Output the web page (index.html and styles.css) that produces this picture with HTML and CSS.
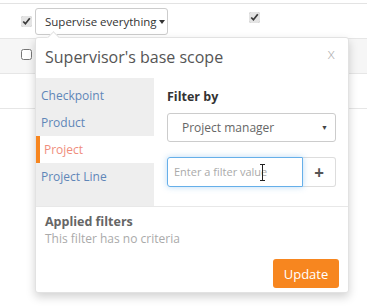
FILE: index.html
```html
<!DOCTYPE html>
<html lang="en">
<head>
<meta charset="UTF-8" />
<title>Supervisor scope</title>
<link rel="stylesheet" href="styles.css">
</head>
<body>
  <div class="grid">
    <div class="row">
      <span class="cell-check"><input type="checkbox" checked></span>
      <span class="cell-scope">
        <button class="scope-btn">Supervise everything<span class="caret"></span></button>
      </span>
      <span class="cell-check2"><input type="checkbox" checked></span>
    </div>
    <div class="row alt">
      <span class="cell-check"><input type="checkbox"></span>
    </div>
    <div class="row"></div>
  </div>

  <div class="popover">
    <div class="popover-arrow"></div>
    <div class="pop-header">
      <span class="pop-title">Supervisor's base scope</span>
      <span class="pop-close">x</span>
    </div>
    <div class="pop-body">
      <ul class="nav">
        <li>Checkpoint</li>
        <li>Product</li>
        <li class="active">Project</li>
        <li>Project Line</li>
      </ul>
      <div class="filter">
        <div class="filter-label">Filter by</div>
        <div class="select">
          <span>Project manager</span>
          <span class="select-caret">&#9660;</span>
        </div>
        <div class="input-group">
          <div class="input">Enter a filter value<span class="ibeam"></span></div>
          <button class="add-btn">+</button>
        </div>
      </div>
    </div>
    <div class="pop-footer">
      <div class="applied-title">Applied filters</div>
      <div class="applied-empty">This filter has no criteria</div>
      <div class="actions">
        <button class="update-btn">Update</button>
      </div>
    </div>
  </div>
</body>
</html>
```

FILE: styles.css
```css
body {
  margin: 0;
  background: #fff;
  font-family: "Open Sans", "Liberation Sans", sans-serif;
  color: #333;
}

.grid {
  margin-top: 3px;
  border-top: 1px solid #e3e3e3;
}

.row {
  display: flex;
  align-items: center;
  height: 34px;
  border-bottom: 1px solid #e6e6e6;
}

.row.alt {
  background: #f6f6f6;
}

input[type="checkbox"] {
  margin: 0;
  width: 11px;
  height: 11px;
  accent-color: #e4e4e4;
}

.cell-check {
  width: 35px;
  padding-left: 21px;
  box-sizing: border-box;
  display: flex;
}

.row.alt .cell-check {
  margin-top: -3px;
}

.cell-scope {
  width: 214px;
}

.cell-check2 {
  display: flex;
  margin-top: -8px;
}

.scope-btn {
  font-family: inherit;
  font-size: 11.5px;
  color: #333;
  background: #fff;
  border: 1px solid #ccc;
  border-radius: 3px;
  padding: 0 0 0 9px;
  height: 27px;
  width: 133px;
  text-align: left;
  white-space: nowrap;
}

.caret {
  display: inline-block;
  width: 0;
  height: 0;
  margin-left: 2px;
  vertical-align: middle;
  border-top: 4px solid #333;
  border-left: 3px solid transparent;
  border-right: 3px solid transparent;
}

.popover {
  position: absolute;
  top: 37px;
  left: 35px;
  width: 314px;
  background: #fff;
  border: 1px solid #e2e2e2;
  border-radius: 3px;
  box-shadow: 0 4px 10px rgba(0,0,0,0.18);
  box-sizing: border-box;
}

.popover-arrow {
  position: absolute;
  top: -5px;
  left: 13px;
  width: 8px;
  height: 8px;
  background: #fff;
  border-left: 1px solid #e2e2e2;
  border-top: 1px solid #e2e2e2;
  transform: rotate(45deg);
}

.pop-header {
  display: flex;
  justify-content: space-between;
  align-items: center;
  padding: 7px 13px 8px 9px;
  line-height: 25px;
}

.pop-title {
  font-size: 16px;
  color: #555;
}

.pop-close {
  font-size: 15px;
  font-weight: 300;
  color: #b0b0b0;
  margin-top: -8px;
}

.pop-body {
  display: flex;
  border-bottom: 1px solid #e8e8e8;
}

.nav {
  list-style: none;
  margin: 0;
  padding: 4px 0 0;
  width: 118px;
  background: #eeeeee;
}

.nav li {
  height: 27px;
  line-height: 27px;
  padding-left: 5px;
  font-size: 12px;
  color: #5f86b8;
}

.nav li.active {
  background: #fff;
  color: #f08d7c;
  border-left: 4px solid #f7861f;
  padding-left: 4px;
}

.filter {
  flex: 1;
  padding: 10px 12px 19px 13px;
}

.filter-label {
  font-size: 12.5px;
  font-weight: bold;
  line-height: 18px;
  color: #333;
  margin-bottom: 7px;
}

.select {
  display: flex;
  justify-content: space-between;
  align-items: center;
  height: 29px;
  box-sizing: border-box;
  border: 1px solid #ccc;
  border-radius: 3px;
  padding: 0 7px 0 14px;
  font-size: 12px;
  color: #666;
}

.select-caret {
  font-size: 7px;
  color: #444;
}

.input-group {
  display: flex;
  margin-top: 15px;
  height: 30px;
}

.input {
  position: relative;
  width: 136px;
  box-sizing: border-box;
  border: 1px solid #66afe9;
  border-radius: 3px 0 0 3px;
  box-shadow: 0 0 6px rgba(102,175,233,0.45);
  padding: 0 6px;
  line-height: 28px;
  font-size: 11px;
  color: #aaa;
}

.ibeam {
  position: absolute;
  left: 94px;
  top: 6px;
  width: 1px;
  height: 17px;
  background: #222;
}

.ibeam::before,
.ibeam::after {
  content: "";
  position: absolute;
  left: -2px;
  width: 5px;
  height: 1px;
  background: #222;
}

.ibeam::before { top: 0; }
.ibeam::after { bottom: 0; }

.add-btn {
  flex: 1;
  background: #fff;
  border: 1px solid #ddd;
  border-left: none;
  border-radius: 0 3px 3px 0;
  font-family: inherit;
  font-size: 17px;
  font-weight: bold;
  color: #555;
  padding: 0;
}

.pop-footer {
  padding: 6px 9px 4px 9px;
}

.applied-title {
  font-size: 12.5px;
  font-weight: bold;
  line-height: 17px;
  color: #666;
}

.applied-empty {
  font-size: 12px;
  line-height: 17px;
  color: #aaa;
}

.actions {
  display: flex;
  justify-content: flex-end;
  margin-top: 12px;
}

.update-btn {
  background: #f7861f;
  color: #fff;
  border: none;
  border-radius: 3px;
  font-family: inherit;
  font-size: 13px;
  height: 29px;
  width: 66px;
  padding: 0;
}
```
